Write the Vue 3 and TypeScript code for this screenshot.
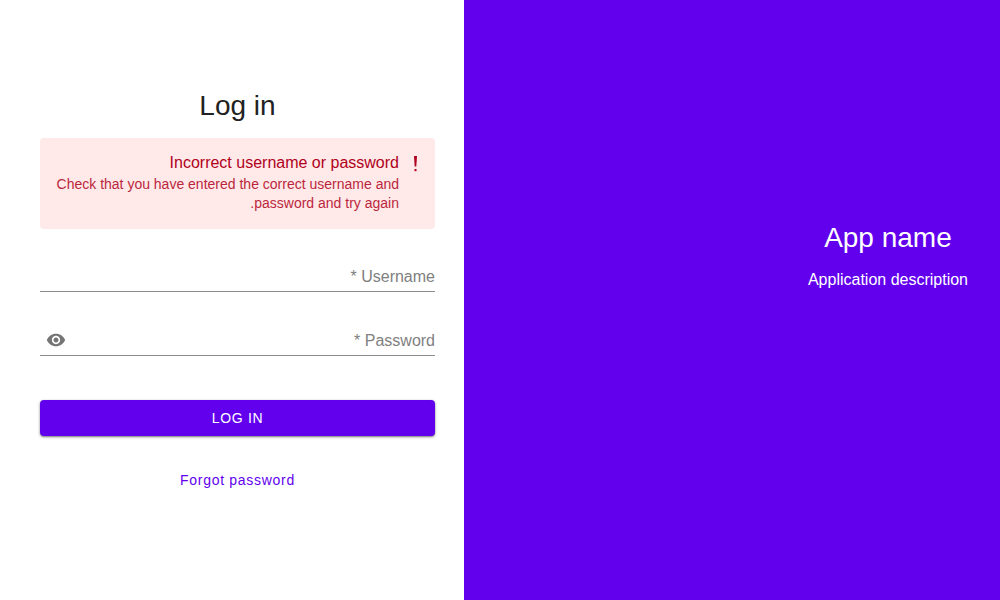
<script setup lang="ts">
import { ref } from 'vue'

const username = ref('')
const password = ref('')
const showPassword = ref(false)
</script>

<template>
  <div class="page" dir="rtl">
    <aside class="brand">
      <div class="brand-text">
        <h2>App name</h2>
        <p>Application description</p>
      </div>
    </aside>
    <main class="panel">
      <form @submit.prevent>
        <h1>Log in</h1>
        <div class="alert" role="alert">
          <svg class="alert-icon" viewBox="0 0 24 24" aria-hidden="true">
            <path d="M11 2h3l-.7 10.6h-1.6z" />
            <rect x="11.5" y="15" width="2" height="2.2" />
          </svg>
          <div>
            <p class="alert-title">Incorrect username or password</p>
            <p class="alert-body">Check that you have entered the correct username and password and try again.</p>
          </div>
        </div>
        <div class="field username">
          <input id="username" v-model="username" type="text" placeholder=" " autocomplete="username" required />
          <label for="username">Username *</label>
        </div>
        <div class="field">
          <input
            id="password"
            v-model="password"
            :type="showPassword ? 'text' : 'password'"
            placeholder=" "
            autocomplete="current-password"
            required
          />
          <label for="password">Password *</label>
          <button class="toggle" type="button" aria-label="Show password" @click="showPassword = !showPassword">
            <svg viewBox="0 0 24 24" aria-hidden="true">
              <path
                d="M12 4.5C7 4.5 2.73 7.61 1 12c1.73 4.39 6 7.5 11 7.5s9.27-3.11 11-7.5c-1.73-4.39-6-7.5-11-7.5zM12 17c-2.76 0-5-2.24-5-5s2.24-5 5-5 5 2.24 5 5-2.24 5-5 5zm0-8c-1.66 0-3 1.34-3 3s1.34 3 3 3 3-1.34 3-3-1.34-3-3-3z"
              />
            </svg>
          </button>
        </div>
        <button class="submit" type="submit">LOG IN</button>
        <a class="forgot" href="#">Forgot password</a>
      </form>
    </main>
  </div>
</template>

<style>
body {
  margin: 0;
}
</style>

<style scoped>
.page {
  display: grid;
  grid-template-columns: 536fr 464fr;
  min-height: 100vh;
  background: #fff;
  color: #212121;
  font-family: 'Liberation Sans', Arial, sans-serif;
  font-size: 16px;
}

h1,
h2,
p {
  margin: 0;
  font-weight: 400;
}

h1,
h2 {
  font-size: 28px;
  line-height: 32px;
}

.brand {
  box-sizing: border-box;
  display: flex;
  align-items: center;
  padding: 0 32px 88px;
  background: #6200ee;
  color: #fff;
}

.brand-text {
  text-align: center;
}

.brand-text p {
  margin-top: 16px;
  line-height: 20px;
}

.panel {
  box-sizing: border-box;
  display: flex;
  align-items: center;
  padding: 0 29px 22px 40px;
}

form {
  display: flex;
  flex: 1;
  flex-direction: column;
}

h1 {
  text-align: center;
}

.alert {
  display: flex;
  gap: 4px;
  margin-top: 16px;
  padding: 16px 8px 16px 16px;
  border-radius: 4px;
  background: #ffe9e9;
  color: #b00020;
}

.alert-icon {
  flex: none;
  width: 24px;
  height: 24px;
  fill: currentColor;
}

.alert-title {
  line-height: 18px;
}

.alert-body {
  margin-top: 3px;
  font-size: 14px;
  line-height: 19px;
  opacity: 0.85;
}

.field {
  position: relative;
  display: flex;
  align-items: center;
  height: 31px;
  margin-top: 32px;
  border-bottom: 1px solid #8c8c8c;
}

.username {
  margin-top: 31px;
}

.field input {
  flex: 1;
  min-width: 0;
  height: 31px;
  padding: 0;
  border: 0;
  outline: 0;
  background: transparent;
  color: #212121;
  font: inherit;
}

.field label {
  position: absolute;
  top: 7px;
  right: 0;
  color: #808080;
  line-height: 20px;
  pointer-events: none;
}

.field input:focus + label,
.field input:not(:placeholder-shown) + label {
  top: -12px;
  font-size: 12px;
}

.toggle {
  display: flex;
  align-items: center;
  justify-content: center;
  width: 32px;
  height: 31px;
  padding: 0;
  border: 0;
  background: transparent;
  color: #757575;
  cursor: pointer;
}

.toggle svg {
  width: 20px;
  height: 20px;
  fill: currentColor;
}

.submit,
.forgot {
  font-size: 14px;
  letter-spacing: 0.05em;
}

.submit {
  height: 36px;
  margin-top: 44px;
  border: 0;
  border-radius: 4px;
  background: #6200ee;
  box-shadow: 0 1px 3px rgba(0, 0, 0, 0.4), 0 1px 1px rgba(0, 0, 0, 0.2);
  color: #fff;
  font-family: inherit;
  font-weight: 500;
  cursor: pointer;
}

.forgot {
  align-self: center;
  margin-top: 36px;
  color: #6200ee;
  line-height: 16px;
  text-decoration: none;
}
</style>
